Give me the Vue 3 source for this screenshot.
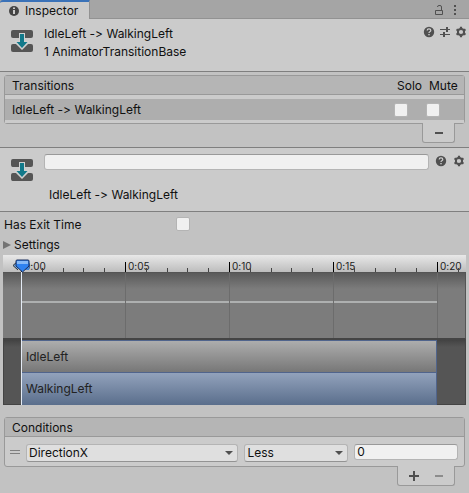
<script setup>
import { ref } from 'vue'

const solo = ref(false)
const mute = ref(false)
const name = ref('')
const hasExitTime = ref(false)
const settingsOpen = ref(false)
const parameter = ref('DirectionX')
const comparison = ref('Less')
const threshold = ref('0')

// one cell per frame, a label on every fifth
const frames = Array.from({ length: 20 }, (_, i) => ({
  id: i,
  major: i % 5 === 0,
  label: '0:' + String(i).padStart(2, '0')
}))
</script>

<template>
  <main class="inspector">
    <svg class="defs" width="0" height="0" aria-hidden="true">
      <symbol id="transition" viewBox="0 0 22 22">
        <path d="M2 0h18q2 0 2 2v4q0 2-2 2H2q-2 0-2-2V2q0-2 2-2z" fill="#555" />
        <path d="M2 14h18q2 0 2 2v4q0 2-2 2H2q-2 0-2-2v-4q0-2 2-2z" fill="#555" />
        <path d="M8 3h6v8h4v2l-7 7-7-7v-2h4z" fill="#d0d0d0" />
        <path d="M9 4h4v8h3.500L11 18l-5.500-6H9z" fill="#12798a" />
      </symbol>
      <symbol id="help" viewBox="0 0 12 12">
        <circle cx="6" cy="6" r="5.2" fill="#505050" />
        <path d="M4.2 4.6q0-1.7 1.8-1.7t1.8 1.5q0 .9-1 1.4-.8.4-.8 1.2" fill="none" stroke="#d0d0d0" stroke-width="1.2" />
        <rect x="5.3" y="8" width="1.4" height="1.3" fill="#d0d0d0" />
      </symbol>
      <symbol id="gear" viewBox="0 0 12 12">
        <circle cx="6" cy="6" r="3.1" fill="none" stroke="#505050" stroke-width="2" />
        <path d="M6 .8v2M6 9.2v2M1.5 3.4l1.7 1M8.8 7.6l1.7 1M1.5 8.6l1.7-1M8.8 4.4l1.7-1" stroke="#505050" stroke-width="2.2" />
      </symbol>
    </svg>

    <header class="tabs">
      <button class="tab" type="button">
        <svg width="10" height="10" viewBox="0 0 10 10">
          <circle cx="5" cy="5" r="5" fill="#444" />
          <path d="M4 4h2v4H4zM4 1.6h2v1.5H4z" fill="#cbcbcb" />
        </svg>
        Inspector
      </button>
      <div class="tab-tools">
        <button class="icon" type="button" aria-label="Lock">
          <svg width="10" height="12" viewBox="0 0 10 12" fill="none" stroke="#505050">
            <path d="M1.5 6.5h7v4h-7zM7.5 6V3q0-1.500-1.500-1.500H5Q3.500 1.500 3.500 3" />
          </svg>
        </button>
        <button class="icon" type="button" aria-label="Menu">
          <svg width="4" height="12" viewBox="0 0 4 12" fill="#505050">
            <path d="M1 1h2v2H1zM1 5h2v2H1zM1 9h2v2H1z" />
          </svg>
        </button>
      </div>
    </header>

    <section class="title">
      <svg class="asset" width="22" height="22"><use href="#transition" /></svg>
      <div class="title-text">
        <div>IdleLeft -&gt; WalkingLeft</div>
        <div>1 AnimatorTransitionBase</div>
      </div>
      <div class="tools">
        <button class="icon" type="button" aria-label="Help"><svg width="12" height="12"><use href="#help" /></svg></button>
        <button class="icon" type="button" aria-label="Presets">
          <svg width="12" height="12" viewBox="0 0 12 12" fill="none" stroke="#505050">
            <path d="M1 3.500h6M8 3.500h3M1 8.500h3M6 8.500h5" />
            <path d="M8 1v5M5 6v5" stroke-width="2" />
          </svg>
        </button>
        <button class="icon" type="button" aria-label="Options"><svg width="12" height="12"><use href="#gear" /></svg></button>
      </div>
    </section>

    <section class="group transitions">
      <table class="box">
        <thead>
          <tr><th>Transitions</th><th class="flag">Solo</th><th class="flag last">Mute</th></tr>
        </thead>
        <tbody>
          <tr>
            <td>IdleLeft -&gt; WalkingLeft</td>
            <td class="flag"><input v-model="solo" type="checkbox" aria-label="Solo"></td>
            <td class="flag last"><input v-model="mute" type="checkbox" aria-label="Mute"></td>
          </tr>
        </tbody>
      </table>
      <div class="footer">
        <button type="button" aria-label="Remove transition">
          <svg width="8" height="8"><path d="M0 3h8v2H0z" fill="#505050" /></svg>
        </button>
      </div>
    </section>

    <section class="title detail">
      <svg class="asset" width="22" height="22"><use href="#transition" /></svg>
      <div class="detail-text">
        <input v-model="name" class="field" type="text" aria-label="Name">
        <div class="detail-name">IdleLeft -&gt; WalkingLeft</div>
      </div>
      <div class="tools">
        <button class="icon" type="button" aria-label="Help"><svg width="12" height="12"><use href="#help" /></svg></button>
        <button class="icon" type="button" aria-label="Options"><svg width="12" height="12"><use href="#gear" /></svg></button>
      </div>
    </section>

    <div class="property">
      <label for="exit-time">Has Exit Time</label>
      <input id="exit-time" v-model="hasExitTime" type="checkbox">
    </div>
    <button class="foldout" type="button" :aria-expanded="settingsOpen" @click="settingsOpen = !settingsOpen">
      <svg width="8" height="10" viewBox="0 0 8 10"><path d="M0 1l8 4-8 4z" fill="#747474" /></svg>
      Settings
    </button>

    <section class="timeline">
      <div class="ruler">
        <div class="frames">
          <div v-for="f in frames" :key="f.id" class="frame" :class="{ major: f.major }">
            <span v-if="f.major">{{ f.label }}</span>
          </div>
        </div>
        <div class="rest">
          <div class="frame major"><span>0:20</span></div>
          <div class="frame"></div>
        </div>
      </div>
      <div class="curve">
        <div class="grid">
          <div v-for="n in 4" :key="n" class="cell"></div>
        </div>
        <div class="cell tail"></div>
      </div>
      <div class="tracks">
        <div class="clips">
          <div class="clip">IdleLeft</div>
          <div class="clip next">WalkingLeft</div>
        </div>
      </div>
      <div class="playhead">
        <svg width="22" height="14" viewBox="0 0 22 14">
          <path d="M7 2L2 6.500 7 11" fill="#6fa3dc" stroke="#333" />
          <path d="M15 3h3v8h-3z" fill="#3f82d8" />
          <path d="M5 2q0-1 1-1h11q1 0 1 1v5l-6.500 6L5 7z" fill="#2f82f0" stroke="#1b2f5c" />
          <path d="M6 2h11v3H6z" fill="#86b9f7" />
        </svg>
      </div>
    </section>

    <section class="group conditions">
      <div class="box">
        <div class="box-head">Conditions</div>
        <div class="condition">
          <svg width="10" height="6"><path d="M0 1h10v1H0zM0 4h10v1H0z" fill="#808080" /></svg>
          <div class="select wide">
            <select v-model="parameter" aria-label="Parameter"><option>DirectionX</option></select>
            <svg width="8" height="4"><path d="M0 0h8L4 4z" fill="#505050" /></svg>
          </div>
          <div class="select">
            <select v-model="comparison" aria-label="Comparison"><option>Greater</option><option>Less</option></select>
            <svg width="8" height="4"><path d="M0 0h8L4 4z" fill="#505050" /></svg>
          </div>
          <input v-model="threshold" class="field" type="text" aria-label="Threshold">
        </div>
      </div>
      <div class="footer">
        <button type="button" aria-label="Add condition">
          <svg width="10" height="10"><path d="M0 4h4V0h2v4h4v2H6v4H4V6H0z" fill="#505050" /></svg>
        </button>
        <button type="button" aria-label="Remove condition">
          <svg width="8" height="8"><path d="M0 3h8v2H0z" fill="#8c8c8c" /></svg>
        </button>
      </div>
    </section>
  </main>
</template>

<style>
body {
  background: #c2c2c2;
}
</style>

<style scoped>
.inspector {
  min-height: 100vh;
  box-sizing: border-box;
  background: #c2c2c2;
  color: #101010;
  font: 12px/18px Inter, "Liberation Sans", sans-serif;
  font-variant-ligatures: none;
}

.defs {
  position: absolute;
}

svg {
  display: block;
  flex: none;
}

button,
input,
select {
  font: inherit;
  color: inherit;
  margin: 0;
  box-sizing: border-box;
}

button {
  display: flex;
  align-items: center;
  padding: 0;
  border: 0;
  background: none;
}

.tabs {
  display: flex;
  justify-content: space-between;
  height: 19px;
  background: #a5a5a5;
  box-shadow: inset 0 -1px #929292;
}

.tab {
  gap: 6px;
  padding: 0 11px 0 9px;
  border-top: 2px solid #3a72b8;
  border-right: 1px solid #929292;
  border-radius: 3px 0 0;
  background: #cbcbcb;
}

.tab-tools {
  display: flex;
  align-items: center;
  gap: 9px;
  padding-right: 12px;
}

.title {
  display: flex;
  align-items: flex-start;
  height: 52px;
  background: #cbcbcb;
  border-bottom: 1px solid #7f7f7f;
}

.asset {
  margin: 11px 11px 0;
}

.title-text {
  flex: 1;
  padding-top: 6px;
}

.tools {
  display: flex;
  gap: 4px;
  padding: 7px 2px 0 0;
}

.group {
  padding: 0 4px;
}

.transitions {
  padding-top: 3px;
  padding-bottom: 4px;
}

.box {
  width: 100%;
  box-sizing: border-box;
  border: 1px solid #999;
  border-radius: 3px;
  background: #cbcbcb;
}

table.box {
  border-collapse: separate;
  border-spacing: 0;
  height: 49px;
}

th,
td {
  padding: 0 0 0 7px;
  text-align: left;
  font-weight: 400;
}

th {
  height: 16px;
  padding-top: 2px;
  line-height: 16px;
  background: #b5b5b5;
  border-bottom: 1px solid #999;
}

td {
  height: 21px;
  background: #aeaeae;
  background-clip: padding-box;
  border-top: 4px solid #cbcbcb;
  border-bottom: 3px solid #cbcbcb;
}

.flag {
  width: 32px;
  padding-left: 3px;
}

td.flag {
  padding-left: 0;
}

.flag.last {
  width: 38px;
}

th.flag {
  box-sizing: border-box;
  height: 19px;
}

input[type="checkbox"] {
  display: block;
  appearance: none;
  width: 14px;
  height: 14px;
  border: 1px solid #b4b4b4;
  border-radius: 2px;
  background: #f0f0f0;
}

input[type="checkbox"]:checked {
  background: #505050;
  box-shadow: inset 0 0 0 3px #f0f0f0;
}

.footer {
  display: flex;
  width: max-content;
  margin: -1px 10px 0 auto;
  box-sizing: border-box;
  height: 20px;
  padding: 0 3px;
  position: relative;
  border: 1px solid #999;
  border-top: 0;
  border-radius: 0 0 3px 3px;
  background: #cbcbcb;
}

.footer button {
  justify-content: center;
  width: 25px;
}

.detail {
  height: 63px;
  border-top: 1px solid #7f7f7f;
}

.detail-text {
  flex: 1;
  padding-top: 6px;
}

.field {
  display: block;
  width: 100%;
  height: 16px;
  padding: 0 2px;
  border: 1px solid #b4b4b4;
  border-top-color: #999;
  border-radius: 3px;
  background: #f0f0f0;
}

.detail-name {
  padding: 16px 5px 0;
}

.detail .tools {
  gap: 6px;
  padding: 7px 4px 0 6px;
}

.property {
  display: flex;
  align-items: center;
  height: 20px;
  padding: 3px 4px 0;
}

.property label {
  width: 172px;
}

.property input {
  margin-bottom: 2px;
}

.foldout {
  gap: 3px;
  height: 20px;
  padding: 0 3px;
}

.timeline {
  position: relative;
  margin: 0 3px;
  color: #222;
}

.ruler,
.curve {
  display: flex;
  padding-left: 18px;
}

.ruler {
  height: 17px;
  background: linear-gradient(#e8e8e8, #bdbdbd);
  font-size: 10px;
  line-height: 22px;
}

.frames {
  display: flex;
  flex: 1;
  min-width: 0;
}

.frame {
  flex: 1;
  min-width: 0;
  height: 4px;
  margin-top: 13px;
  border-left: 1px solid #444;
  white-space: nowrap;
}

.frame.major {
  height: 10px;
  margin-top: 7px;
  border-color: #000;
}

.frame span {
  display: block;
  margin: -7px 0 0 2px;
}

.rest {
  display: flex;
  width: 29px;
}

.rest .frame.major {
  flex: 0 0 20px;
}

.curve {
  height: 67px;
  box-sizing: border-box;
  border-top: 1px solid #555;
  border-bottom: 1px solid #444;
  border-right: 1px solid #555;
  background:
    linear-gradient(#aeb0b0, #aeb0b0) 18px 28px / calc(100% - 46px) 2px no-repeat,
    linear-gradient(#5a5a5a, #7c7c7c 16px);
}

.grid {
  display: flex;
  flex: 1;
}

.cell {
  flex: 1;
  border-left: 1px solid #6c6c6c;
}

.tail {
  flex: 0 0 27px;
}

.tracks {
  padding: 1px 29px 0 19px;
  background: linear-gradient(#404040, #555 8px);
  box-shadow: inset 0 0 0 1px #444;
}

.clips {
  border-right: 1px solid #50648c;
}

.clip {
  height: 32px;
  box-sizing: border-box;
  padding-left: 4px;
  line-height: 32px;
  border-top: 1px solid #50648c;
  background: linear-gradient(#adadad, #777);
}

.clip.next {
  height: 33px;
  background: linear-gradient(#92a2bc, #5a6e8c);
}

.playhead {
  position: absolute;
  top: 4px;
  bottom: 0;
  left: 8px;
}

.playhead::after {
  content: "";
  position: absolute;
  top: 13px;
  bottom: 0;
  left: 10px;
  width: 1px;
  background: #e4ebf5;
}

.conditions {
  padding-top: 12px;
}

.box-head {
  height: 18px;
  padding-left: 7px;
  border-bottom: 1px solid #999;
  background: #b5b5b5;
  line-height: 20px;
}

.condition {
  display: flex;
  align-items: flex-start;
  gap: 6px;
  padding: 7px 6px 4px 5px;
}

.condition > svg {
  margin-top: 5px;
}

.select {
  display: flex;
  align-items: center;
  flex: 1 1 104px;
  min-width: 0;
  height: 18px;
  box-sizing: border-box;
  border: 1px solid #b4b4b4;
  border-bottom-color: #939393;
  border-radius: 3px;
  background: #dfdfdf;
}

.select.wide {
  flex: 2 1 213px;
}

.select select {
  flex: 1;
  min-width: 0;
  height: 16px;
  padding: 0 2px;
  border: 0;
  background: none;
  appearance: none;
  line-height: 16px;
}

.select svg {
  margin-right: 4px;
  pointer-events: none;
}

.condition .field {
  flex: 1 1 104px;
  min-width: 0;
}
</style>
